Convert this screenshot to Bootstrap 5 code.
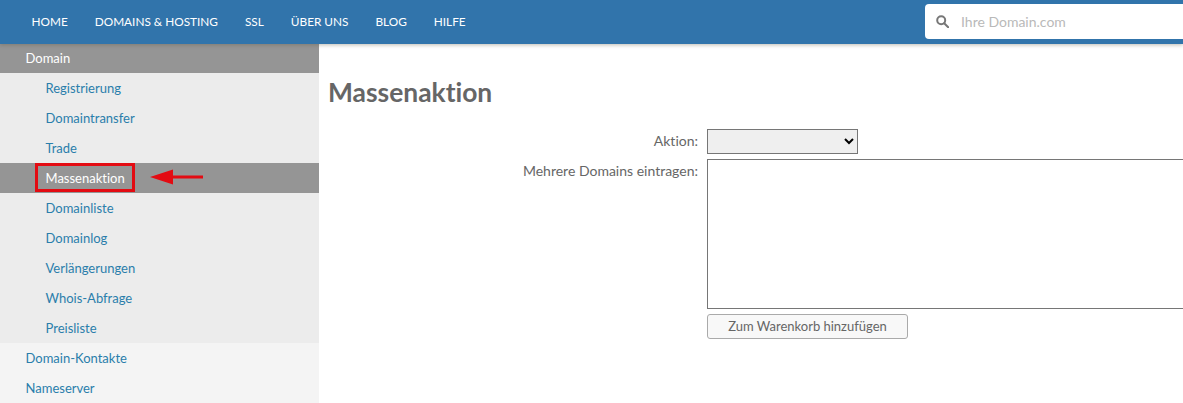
<!DOCTYPE html>
<html lang="de">
<head>
<meta charset="utf-8">
<title>Massenaktion</title>
<link href="https://cdn.jsdelivr.net/npm/bootstrap@5.3.0/dist/css/bootstrap.min.css" rel="stylesheet">
<style>
html,body{height:403px;overflow:hidden}
body{font-family:Lato,"Liberation Sans",sans-serif;font-size:14px;color:#666;background:#fff;font-variant-ligatures:none}
.topbar{height:44px;background:#3174ab;box-shadow:0 1px 4px rgba(90,80,60,.4);padding-left:18px;position:relative;z-index:2;flex-wrap:nowrap}
.topbar .nav-link{color:#fff;font-size:11.8px;padding:0 13.5px;line-height:43px}
.searchbox{width:258px;height:35px;margin-top:4px;background:#fff;border-radius:4px 0 0 4px;padding-left:11px;gap:12px}
.searchbox input{border:0;outline:0;padding:0;font:14px Lato,sans-serif;flex:1;min-width:0}
.searchbox input::placeholder{color:#b9b9b9;opacity:1}
.mainrow{height:359px}
.sidenav{width:319px;flex:none;background:#f4f4f4;overflow:hidden}
.sidenav a{display:block;height:30px;line-height:30px;text-decoration:none;color:#2a7eab;font-size:13px}
.lvl1{padding-left:25.5px}
.lvl2{padding-left:45.5px}
.subgroup{background:#ececec}
.sidenav a.cur{background:#959595;color:#fff}
.sidenav a.head{height:29px;line-height:29px}
.markwrap{position:relative}
.redbox{position:absolute;left:35px;top:0;width:100px;height:29px;border:3px solid #e30b12}
.redarrow{position:absolute;left:149px;top:5px}
.content{padding:0 0 0 9px;min-width:0;overflow:hidden}
.pagetitle{font-size:26.4px;font-weight:700;color:#666;line-height:32px;margin:32px 0 0}
.formgrid{display:grid;grid-template-columns:370px 1fr;column-gap:9px;margin-top:21px}
.formgrid label{text-align:right;line-height:20px;font-size:14px}
.lab1,.lab2{padding-top:2px}
.aksel{width:151px;height:25px;background:#efefef;border:1px solid #767676;border-radius:0;font-size:13px;display:block;margin-bottom:5px}
.aktext{display:block;width:600px;height:150px;border:1px solid #767676;border-radius:0;resize:none;outline:0}
.addbtn{width:201px;height:25px;margin-top:5px;padding:0;font-size:13px;line-height:23px;background:#f8f8f8;border:1px solid #aaa;border-radius:3px;color:#666;grid-column:2}
</style>
</head>
<body>
<nav class="topbar d-flex justify-content-between">
  <ul class="nav flex-nowrap">
    <li class="nav-item"><a class="nav-link" href="#">HOME</a></li>
    <li class="nav-item"><a class="nav-link" href="#">DOMAINS &amp; HOSTING</a></li>
    <li class="nav-item"><a class="nav-link" href="#">SSL</a></li>
    <li class="nav-item"><a class="nav-link" href="#">ÜBER UNS</a></li>
    <li class="nav-item"><a class="nav-link" href="#">BLOG</a></li>
    <li class="nav-item"><a class="nav-link" href="#">HILFE</a></li>
  </ul>
  <div class="searchbox d-flex align-items-center">
    <svg width="13" height="13" viewBox="0 0 13 13" fill="none" stroke="#777" stroke-width="2"><circle cx="5.2" cy="5.2" r="4"/><path d="M8.2 8.2l4 4" stroke-linecap="round"/></svg>
    <input type="text" placeholder="Ihre Domain.com">
  </div>
</nav>
<div class="mainrow d-flex">
  <aside class="sidenav">
    <a class="cur head lvl1" href="#">Domain</a>
    <div class="subgroup">
      <a class="lvl2" href="#">Registrierung</a>
      <a class="lvl2" href="#">Domaintransfer</a>
      <a class="lvl2" href="#">Trade</a>
      <div class="markwrap">
        <a class="lvl2 cur" href="#">Massenaktion</a>
        <span class="redbox"></span>
        <svg class="redarrow" width="56" height="18" viewBox="0 0 56 18"><path d="M1 9 24 1.5V7.6H54V10.4H24V16.5Z" fill="#e30b12"/></svg>
      </div>
      <a class="lvl2" href="#">Domainliste</a>
      <a class="lvl2" href="#">Domainlog</a>
      <a class="lvl2" href="#">Verlängerungen</a>
      <a class="lvl2" href="#">Whois-Abfrage</a>
      <a class="lvl2" href="#">Preisliste</a>
    </div>
    <a class="lvl1" href="#">Domain-Kontakte</a>
    <a class="lvl1" href="#">Nameserver</a>
  </aside>
  <main class="content flex-grow-1">
    <h1 class="pagetitle">Massenaktion</h1>
    <form class="formgrid">
      <label class="lab1">Aktion:</label>
      <select class="aksel"><option></option></select>
      <label class="lab2">Mehrere Domains eintragen:</label>
      <textarea class="aktext"></textarea>
      <button type="button" class="addbtn">Zum Warenkorb hinzufügen</button>
    </form>
  </main>
</div>
<script src="https://cdn.jsdelivr.net/npm/bootstrap@5.3.0/dist/js/bootstrap.bundle.min.js"></script>
</body>
</html>
